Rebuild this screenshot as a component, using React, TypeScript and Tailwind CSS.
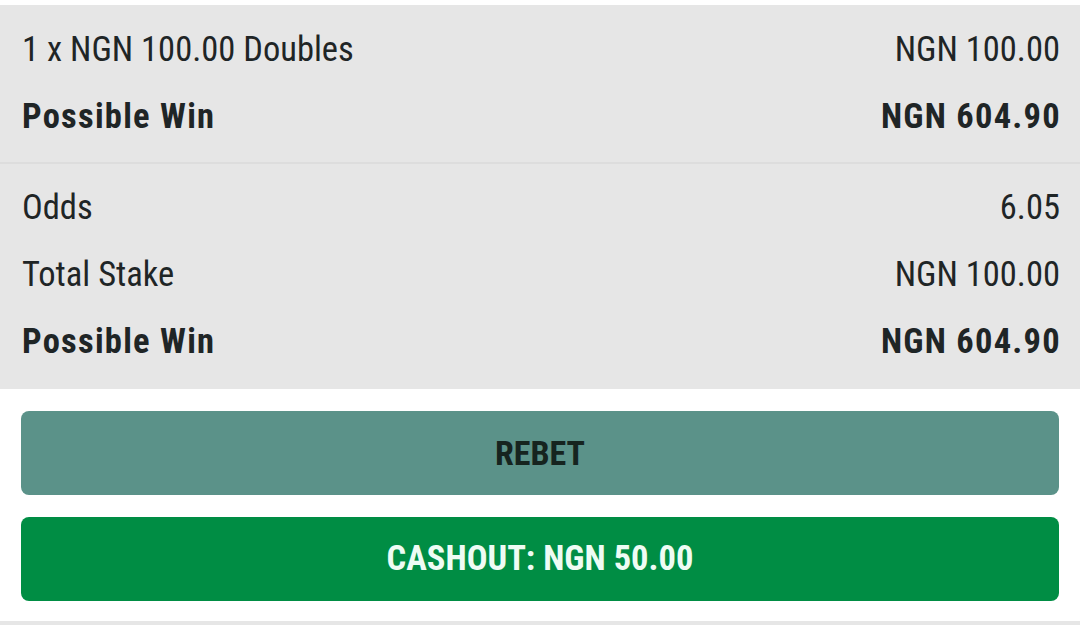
import React from "react";

const Row = ({
  label,
  value,
  bold = false,
}: {
  label: string;
  value: string;
  bold?: boolean;
}) => (
  <div
    className={`flex h-[67px] items-center justify-between text-[34.5px] leading-none text-[#1f2526] ${
      bold ? "font-bold tracking-[1.25px]" : "font-normal"
    }`}
  >
    <span>{label}</span>
    <span className={bold ? "-mr-[1px]" : ""}>{value}</span>
  </div>
);

const App = () => {
  return (
    <main className="flex h-[625px] w-[1080px] flex-col bg-white font-['Roboto',sans-serif] [font-stretch:condensed]">
      <div className="mt-[5px] flex flex-col bg-[#e6e6e6]">
        <section className="pb-[12px] pl-[22px] pr-[20px] pt-[11px]">
          <Row label="1 x NGN 100.00 Doubles" value="NGN 100.00" />
          <Row label="Possible Win" value="NGN 604.90" bold />
        </section>
        <div className="h-[2px] bg-[#dddddd]" />
        <section className="pb-[14px] pl-[22px] pr-[20px] pt-[10px]">
          <Row label="Odds" value="6.05" />
          <Row label="Total Stake" value="NGN 100.00" />
          <Row label="Possible Win" value="NGN 604.90" bold />
        </section>
      </div>
      <div className="flex flex-1 flex-col gap-[22px] px-[21px] pt-[22px]">
        <button className="flex h-[84px] w-full items-center justify-center rounded-[8px] bg-[#5b9289] text-[34px] font-bold text-[#16241f]">
          REBET
        </button>
        <button className="flex h-[84px] w-full items-center justify-center rounded-[8px] bg-[#008d44] text-[34.5px] font-bold text-[#eefcf4]">
          CASHOUT: NGN 50.00
        </button>
      </div>
      <div className="h-[4px] bg-[#e6e6e6]" />
    </main>
  );
};

export default App;
